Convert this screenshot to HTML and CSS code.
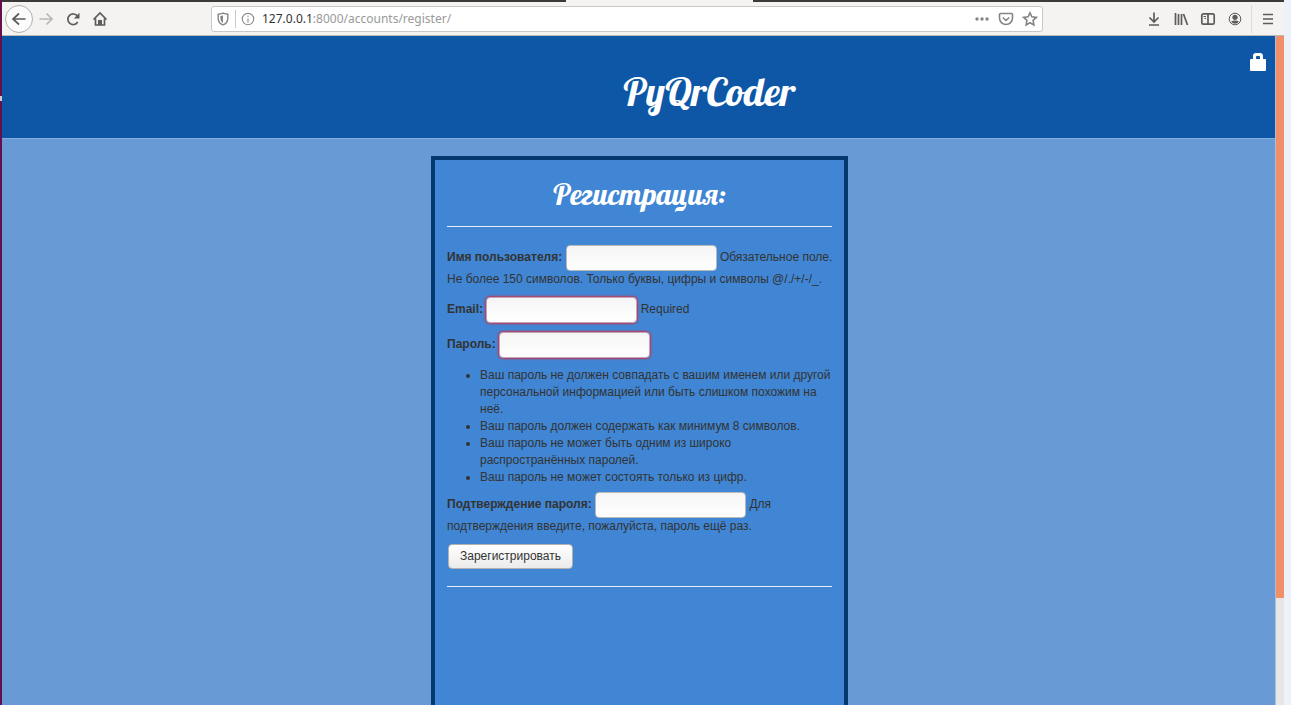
FILE: index.html
```
<!DOCTYPE html>
<html lang="ru">
<head>
<meta charset="utf-8">
<title>PyQrCoder</title>
<link rel="stylesheet" href="styles.css">
</head>
<body>
<div class="desktop">
  <div class="launcher"><span class="launcher-mark"></span></div>
  <div class="window">
    <div class="tabstrip"><div class="tab-active"></div></div>
    <nav class="toolbar" aria-label="Навигация">
      <div class="nav-buttons">
        <button class="tool back" type="button" aria-label="Назад"><svg width="16" height="16" viewBox="0 0 16 16"><path d="M14.500 8H2M8 2.500L2 8l6 5.500"/></svg></button>
        <button class="tool forward" type="button" aria-label="Вперёд"><svg width="16" height="16" viewBox="0 0 16 16"><path d="M1.500 8H14M8.500 2.500L14 8l-5.500 5.500"/></svg></button>
        <button class="tool" type="button" aria-label="Обновить"><svg width="16" height="16" viewBox="0 0 16 16"><path d="M12.500 5.200A5.300 5.300 0 1 0 12.700 11"/><path class="solid" d="M14.500 1.800V7.500H8.800z"/></svg></button>
        <button class="tool" type="button" aria-label="Домой"><svg width="16" height="16" viewBox="0 0 16 16"><path d="M1.500 8.500L8 2l6.500 6.500M3.500 7.500V14h9V7.500"/><path class="solid" d="M6 9h4v5H6z"/></svg></button>
      </div>
      <div class="address">
        <svg class="muted" width="14" height="14" viewBox="0 0 16 16"><path d="M2.500 2.500Q5.500 2.500 8 1.300Q10.500 2.500 13.500 2.500V7Q13.500 12.500 8 14.700Q2.500 12.500 2.500 7z"/><path class="solid" d="M5 4.500L8 4V12.500Q5 11 5 7z"/></svg>
        <span class="address-divider"></span>
        <svg class="muted thin" width="14" height="14" viewBox="0 0 16 16"><circle cx="8" cy="8" r="6.500"/><path d="M8 7.300V12M8 4.200v1.500"/></svg>
        <a class="url" href="#"><b>127.0.0.1</b>:8000/accounts/register/</a>
        <svg class="muted" width="16" height="16" viewBox="0 0 16 16"><g class="solid"><circle cx="3" cy="8" r="1.700"/><circle cx="8" cy="8" r="1.700"/><circle cx="13" cy="8" r="1.700"/></g></svg>
        <svg class="muted" width="16" height="16" viewBox="0 0 16 16"><path d="M2.500 2.500h11q1 0 1 1V7a6.500 6.500 0 0 1-13 0V3.500q0-1 1-1zM4.800 6.500L8 9.500l3.200-3"/></svg>
        <svg class="muted" width="16" height="16" viewBox="0 0 16 16"><path d="M8 1.800L9.900 5.800l4.400.6-3.200 3 .8 4.500L8 11.700l-3.900 2.200.8-4.500-3.200-3 4.400-.6z"/></svg>
      </div>
      <div class="tools-right">
        <button class="tool" type="button" aria-label="Загрузки"><svg width="16" height="16" viewBox="0 0 16 16"><path d="M8 1.500v9M3.500 6.500L8 11l4.500-4.500M3 14h10"/></svg></button>
        <button class="tool" type="button" aria-label="Библиотека"><svg width="16" height="16" viewBox="0 0 16 16"><path d="M2.500 2v12M5.500 3v11M8.500 3v11M10.500 3l4 11"/></svg></button>
        <button class="tool" type="button" aria-label="Боковая панель"><svg width="16" height="16" viewBox="0 0 16 16"><rect x="1.800" y="2.800" width="12.400" height="10.400" rx="1.500"/><path d="M8 2.500v11"/><path class="hair" d="M3.500 5.500h2.500M4.500 7.500h1.500"/></svg></button>
        <button class="tool" type="button" aria-label="Аккаунт"><svg width="16" height="16" viewBox="0 0 16 16"><circle class="hair" cx="8" cy="8" r="5.800"/><circle class="solid" cx="8" cy="6.300" r="2.600"/><path class="solid" d="M4 10.500Q8 8.300 12 10.500Q8 15 4 10.500z"/></svg></button>
        <span class="tool-divider"></span>
        <button class="tool" type="button" aria-label="Меню"><svg width="16" height="16" viewBox="0 0 16 16"><path d="M3 3.500h10M3 8h10M3 12.500h10"/></svg></button>
      </div>
    </nav>
    <div class="viewport">
      <div class="page">
        <header class="site-header">
          <h1 class="site-title">PyQrCoder</h1>
          <a class="login" href="#" aria-label="Войти"><svg width="18" height="18" viewBox="0 0 18 18"><path d="M4 6V3q0-3 3-3h4q3 0 3 3v3h2q1 0 1 1v10q0 1-1 1H2q-1 0-1-1V7q0-1 1-1zM7 6h4V4q0-1-1-1H8Q7 3 7 4z"/></svg></a>
        </header>
        <main class="content">
          <section class="panel">
            <h2 class="panel-title">Регистрация:</h2>
            <form class="form">
              <p class="row"><label for="username">Имя пользователя:</label> <input class="field" id="username" type="text"> <span>Обязательное поле.</span><br><span>Не более 150 символов. Только буквы, цифры и символы @/./+/-/_.</span></p>
              <p class="row"><label for="email">Email:</label> <input class="field invalid" id="email" type="email"> <span>Required</span></p>
              <p class="row"><label for="password">Пароль:</label> <input class="field invalid" id="password" type="password"></p>
              <ul class="hints">
                <li>Ваш пароль не должен совпадать с вашим именем или другой персональной информацией или быть слишком похожим на неё.</li>
                <li>Ваш пароль должен содержать как минимум 8 символов.</li>
                <li>Ваш пароль не может быть одним из широко распространённых паролей.</li>
                <li>Ваш пароль не может состоять только из цифр.</li>
              </ul>
              <p class="row"><label for="confirm">Подтверждение пароля:</label> <input class="field" id="confirm" type="password"> <span>Для</span><br><span>подтверждения введите, пожалуйста, пароль ещё раз.</span></p>
              <button class="submit" type="button">Зарегистрировать</button>
            </form>
          </section>
        </main>
      </div>
      <div class="scrollbar"><div class="thumb"></div></div>
    </div>
  </div>
</div>
</body>
</html>
```
FILE: styles.css
```
* { box-sizing: border-box; }
body {
  margin: 0;
  font-family: "Liberation Sans", Arial, sans-serif;
  font-size: 12px;
  line-height: 17px;
  color: #333;
}
button { border: 0; padding: 0; font: inherit; color: inherit; }
svg { display: block; flex: none; fill: none; stroke: currentColor; stroke-width: 1.7; }
.solid { fill: currentColor; stroke: none; }
.hair { stroke-width: 1; }

.desktop { display: flex; height: 100vh; padding-right: 7px; background: #edf1fa; overflow: hidden; }
.launcher { display: flex; width: 2px; background: #64104f; padding-top: 96px; }
.launcher-mark { width: 2px; height: 5px; background: #d5cbd2; }
.window { flex: 1; min-width: 0; display: flex; flex-direction: column; }
.tabstrip { height: 2px; background: #3c3936; display: flex; justify-content: center; padding-left: 32px; }
.tab-active { width: 187px; background: #f4f3f1; }

.toolbar { display: flex; align-items: center; height: 34px; padding: 0 8px 0 3px; background: #f4f3f1; border-bottom: 1px solid #bcb9b3; }
.nav-buttons { display: flex; align-items: center; gap: 11px; }
.tool { display: flex; align-items: center; justify-content: center; background: none; color: #5c5c5a; }
.back { width: 28px; height: 28px; border: 1px solid #b3b1ad; border-radius: 50%; background: #fcfcfc; }
.forward { color: #b9b8b6; margin-left: -6px; }
.address { display: flex; flex: 1; align-items: center; height: 26px; margin: 0 103px; padding: 0 4px; gap: 8px; background: #fff; border: 1px solid #c9c8c4; border-radius: 3px; }
.muted { color: #858584; stroke-width: 1.6; }
.muted.thin { stroke-width: 1.2; }
.address-divider { width: 1px; height: 18px; margin: 0 -3px; background: #c9c9c9; }
.url { flex: 1; margin-left: -1px; font-family: "Noto Sans", sans-serif; font-size: 12px; color: #999; text-decoration: none; white-space: nowrap; }
.url b { font-weight: 400; color: #333; }
.tools-right { display: flex; align-items: center; gap: 11px; }
.tool-divider { width: 1px; height: 28px; margin: 0 -3px; background: #dcdbd8; }

.viewport { flex: 1; min-height: 0; display: flex; }
.page { flex: 1; min-width: 0; display: flex; flex-direction: column; background: #689bd5; }
.site-header { display: flex; align-items: center; height: 103px; padding: 0 8px 0 168px; background: #0d57a6; border-bottom: 1px solid #82aee0; }
.site-title { flex: 1; margin: 0; padding-top: 8px; font: 400 40px/48px Lobster, "Liberation Serif", serif; color: #fff; text-align: center; }
.login { align-self: flex-start; margin-top: 17px; color: #fff; }
.login svg { fill: currentColor; fill-rule: evenodd; stroke: none; }
.content { flex: 1; min-height: 0; display: flex; justify-content: center; padding: 17px 0 0 2px; }
.panel { width: 417px; max-width: 100%; padding: 12px; border: 4px solid #043970; border-bottom: 0; background: #4086d4; }
.panel-title { margin: 0; padding-bottom: 10px; border-bottom: 1px solid #e6eef8; font: 400 30px/44px Lobster, "Liberation Serif", serif; color: #fff; text-align: center; }
.form { padding: 18px 0 17px; border-bottom: 1px solid #e6eef8; }
.row { margin: 0 0 9px; white-space: nowrap; }
.row label { font-weight: 700; }
.field { width: 151px; height: 26px; margin: 0; padding: 3px 5px; vertical-align: middle; border: 1px solid #b8b8b8; border-radius: 4px; background: linear-gradient(#f5f5f5, #fff); font: inherit; }
.invalid { border-color: #c6a3b5; box-shadow: 0 0 2px 1px #c43658; }
.hints { margin: 0 0 6px; padding: 0 0 0 33px; }
.submit { height: 25px; margin-left: 1px; padding: 0 11px; border: 1px solid #b3b1ae; border-radius: 4px; background: linear-gradient(#fff, #ebebeb); }

.scrollbar { width: 9px; background: #e6e6e6; border-left: 1px solid #aebfd4; }
.thumb { height: 84%; background: #f08f68; }
```
